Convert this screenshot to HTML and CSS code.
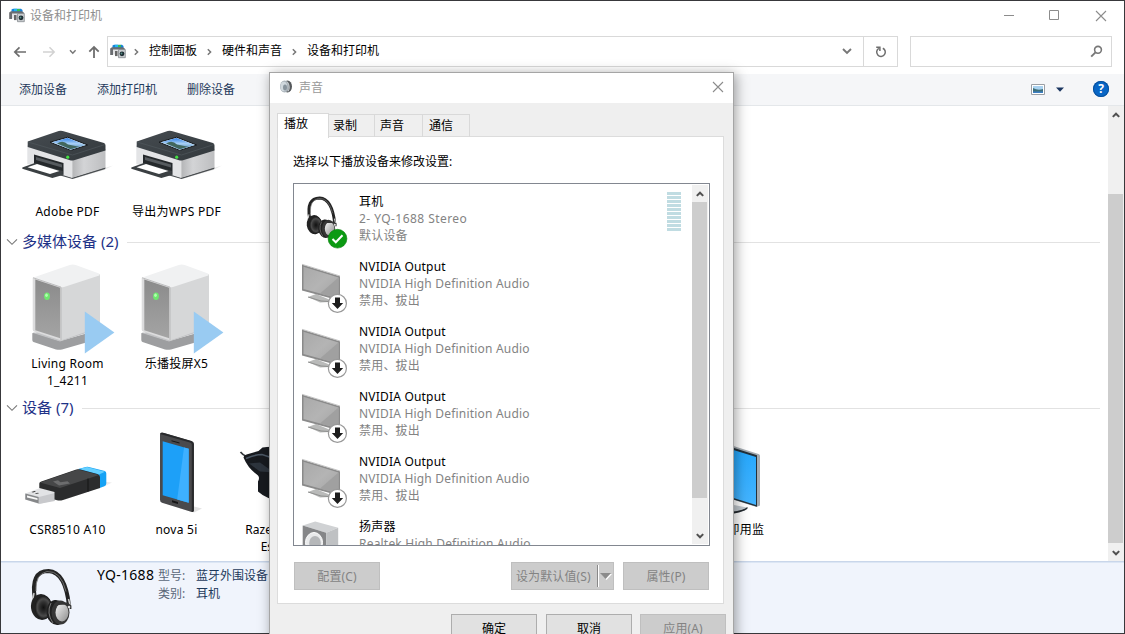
FILE: index.html
```html
<!DOCTYPE html>
<html lang="zh-CN">
<head>
<meta charset="utf-8">
<title>设备和打印机</title>
<link rel="stylesheet" href="styles.css">
</head>
<body>
<svg class="defs" width="0" height="0" aria-hidden="true">
  <defs>
    <linearGradient id="lid" x1="0" y1="0" x2="1" y2="1"><stop offset="0" stop-color="#454b50"/><stop offset="1" stop-color="#33393d"/></linearGradient>
    <linearGradient id="side" x1="0" y1="0" x2="1" y2="0"><stop offset="0" stop-color="#b4b5b7"/><stop offset=".35" stop-color="#d3d4d6"/><stop offset="1" stop-color="#bdbec0"/></linearGradient>
    <linearGradient id="photo" x1="0" y1="0" x2="0" y2="1"><stop offset="0" stop-color="#2f7fe6"/><stop offset=".5" stop-color="#a9d0f5"/><stop offset="1" stop-color="#3f7fb0"/></linearGradient>
    <linearGradient id="front" x1="0" y1="0" x2="0" y2="1"><stop offset="0" stop-color="#8b8b8b"/><stop offset="1" stop-color="#a4a4a4"/></linearGradient>
    <linearGradient id="panel" x1="0" y1="0" x2="1" y2="1"><stop offset="0" stop-color="#a9a9a9"/><stop offset=".5" stop-color="#b4b4b4"/><stop offset="1" stop-color="#a3a3a3"/></linearGradient>
    <linearGradient id="blue" x1="0" y1="0" x2="0" y2="1"><stop offset="0" stop-color="#1ea4fb"/><stop offset="1" stop-color="#44b4ff"/></linearGradient>
    <linearGradient id="disc" x1="0" y1="0" x2="1" y2="1"><stop offset="0" stop-color="#f4f4f4"/><stop offset="1" stop-color="#8d8d8d"/></linearGradient>
    <radialGradient id="cup"><stop offset="0" stop-color="#111"/><stop offset=".5" stop-color="#333"/><stop offset=".75" stop-color="#4c4c4c"/><stop offset="1" stop-color="#1a1a1a"/></radialGradient>
  </defs>
  <symbol id="printer" viewBox="13 106 109 97">
    <path d="M73 179l35-12 5-1.500-10 5z" fill="#e9e9e9"/>
    <path d="M27.300 163l45 14.500 33-10.500v2L72.500 179 55 174z" fill="#4a4e51"/>
    <path d="M27.300 145l45 14v19L27.300 164z" fill="#e3e4e6"/>
    <path d="M72.300 159l33.200-10v18.500l-33.200 10.200z" fill="url(#side)"/>
    <path d="M34 154.500l29.500 8.500v12L34 165z" fill="#25292c"/>
    <path d="M36 157l26 7.500v3L36 160z" fill="#565b5f"/>
    <path d="M22.300 167.500l12.500-4.500 28 8v4l-10.500 3-30-9.200z" fill="#3b4043"/>
    <path d="M27.500 167.300l9.500-3.300 22.500 6.900-9.500 3z" fill="#fff"/>
    <path d="M27.700 141.500l31-10.500q2-.6 4 0L104 143q1.500.5 1.500 2.500v5L74 160.200q-2 .6-4 0L27.700 147z" fill="url(#lid)"/>
    <path d="M28 142l44.500 13L105 144.500" fill="none" stroke="#535a5f" stroke-width=".6"/>
    <path d="M50 142.200l17.700-5 20 7.800-17 5.400z" fill="#dfe8ef" stroke="#15191c" stroke-width="1"/>
    <path d="M52 142.300l15.500-4.300 18.300 6.900-15 4.500z" fill="url(#photo)"/>
    <path d="M57 143.500q6-4 11 1l11 2.200-8.500 2.300z" fill="#42675d"/>
    <circle cx="67.700" cy="157.200" r="1.600" fill="#42df42"/>
  </symbol>
  <symbol id="server" viewBox="13 257 109 98">
    <path d="M32.300 333.500q0-1 2-.7L60 341l28-8v9l-26 7.400q-3 .8-6 0L33.500 342q-1.200-.5-1.200-2z" fill="#9d9ea0"/>
    <path d="M33 333l27 8.500 28-9-28-5z" fill="#c2c3c5"/>
    <path d="M61 286.500l39-12.500v53l-39 13.500z" fill="#d6d7d8"/>
    <path d="M32.700 277.700l37-12.600q3-1 6 0L99 273.500q1.500.8.300 2L64 287q-3 .8-5 0z" fill="#f0f1f2"/>
    <path d="M32.700 277.700L61 287v53.500l-27-9q-1.300-.4-1.300-2z" fill="#dcdcdd"/>
    <path d="M35.300 279.500l24.900 8.200v50.600l-24.900-8z" fill="url(#front)"/>
    <path d="M33 277.700l28 9.400v53" fill="none" stroke="#b2b2b4" stroke-width=".8"/>
    <ellipse cx="47" cy="296.300" rx="2.900" ry="3.700" fill="#6fe86f"/><ellipse cx="46.500" cy="295.300" rx="1.300" ry="1.800" fill="#b2ffb0"/>
    <path d="M84.800 311.600l29.600 20.900-29.600 20.900z" fill="#99cbf2"/>
  </symbol>
  <symbol id="usb" viewBox="13 424 109 97">
    <path d="M62 501l42-14 8-4-8-1z" fill="#ececec"/>
    <path d="M25.300 494l15-5.500 15 4v8l-16 4-14-4.500z" fill="#e2e3e5"/>
    <path d="M25.300 494l13.500 3.500v6.500l-13.500-4z" fill="#858789"/><path d="M27 496l10.500 2.700v1.800L27 498z" fill="#f8f8f8"/>
    <path d="M38.800 497.500l16-4v8l-16 3z" fill="#c8c9cc"/><path d="M31.500 492.500l3-1 1.500.6-3 1zM35 494l3-.8 1 .5-3 .9z" fill="#333"/>
    <path d="M78.300 469.500l7.500-2q1.500-.4 3 0l16 4q1.500.5 1.500 2.500v10q0 2-2 2.700L99 488.700z" fill="#15a2f5"/>
    <path d="M79 469.500l8-2 18 4.700-6 2.800z" fill="#64cfff"/>
    <path d="M39.300 484q0-1.300 2-2l35-12q2-.6 4-.1l17 4.500q2.700.8 2.700 3v11L63 500.500q-3 .9-6 .2l-2.500-.8v-7.500l-15.200-4z" fill="#2b2c2d"/>
    <path d="M40 483l38-13 21 5.500-39 13z" fill="#464748"/>
    <path d="M53 482l6 4 11-2-2.500-2.300-7 1.100-2.500-2z" fill="#6c6d6e"/>
    <path d="M88 479v13" stroke="#151515"/>
  </symbol>
  <symbol id="phone" viewBox="122 424 109 97">
    <path d="M177 508l17 5 8-4-8-2z" fill="#e2e2e2"/>
    <path d="M160 435q0-2.500 3-1.700l28 8.200q3 .9 3 3.500v66q0 2-3 1.200l-29-9q-2-.6-2-3z" fill="#4a4a4c"/>
    <path d="M160 434.500q1.500-2 4-1l27.500 8q2.300.8 2.300 3.500v66q0 1.800-2 1.400V445q0-1.500-1.800-2z" fill="#292a2c"/>
    <path d="M162.700 441.700l26 7.500v54l-26-7.500z" fill="#1da0f8"/>
    <path d="M184 447.900l4.700 1.300v54l-11.500-3.300z" fill="#3eb0ff"/>
    <path d="M171.500 440.700l8 2.300v1l-8-2.300zM172 500.700l6 1.800v2l-6-1.800z" fill="#151516"/>
  </symbol>
  <symbol id="mouse" viewBox="231 424 109 97">
    <path d="M240.500 452.500q2 3 7 5" fill="none" stroke="#33373b" stroke-width="1.600"/>
    <path d="M243.500 458q0-2 3-3l12-3.500 4-3.500q18-3 30 6l10 20v24l-20 4q-16-2-24.500-10v-10q2-4 0-6-10-7-14.500-18z" fill="#171a1f"/>
    <path d="M246 459q9-4 16-4l15 5" fill="none" stroke="#4c5866" stroke-width="1.500"/><path d="M249 464l11 8 14 1-14-10z" fill="#2d343d"/>
  </symbol>
  <symbol id="monitor" viewBox="667 424 109 97">
    <path d="M705 500l42 8q2 2-8 5l-13 2-30-9z" fill="#c1c8ce"/><path d="M724 512.500q17 0 23.500-5v1.500q-4 4-23.500 6.500z" fill="#22282d"/>
    <path d="M685 431l73.500 23.500q1.500.5 1.500 2V506l-3.500 1.500L685 485z" fill="#a5acb2"/>
    <path d="M685 433l72 22.800v51.500L685 485z" fill="#24313a"/>
    <path d="M687 436l69 21.500v48L687 484z" fill="url(#blue)"/>
  </symbol>
  <symbol id="headphones" viewBox="28 566 46 62">
    <path d="M35 598q-5-28 13.500-28 17 1 20.500 35" fill="none" stroke="#242424" stroke-width="4"/>
    <path d="M36 590q-1-17 11-19.500 14-1 19 20" fill="none" stroke="#777" stroke-width=".9"/>
    <path d="M34 592l-1.500 8M68.500 598l2 8" stroke="#c9c9c9" stroke-width="1.500"/>
    <ellipse cx="41.500" cy="606" rx="10.500" ry="13" transform="rotate(-8 41.500 606)" fill="#222"/>
    <ellipse cx="43.500" cy="606.500" rx="8.500" ry="11.500" fill="url(#cup)"/>
    <ellipse cx="56.500" cy="611.500" rx="10" ry="12.500" transform="rotate(-8 56.500 611.500)" fill="#202020"/>
    <path d="M51 602q-5 10 2 20" fill="none" stroke="#777"/>
    <ellipse cx="60.500" cy="611.500" rx="9" ry="12" fill="#363636"/>
    <ellipse cx="62" cy="611.500" rx="6.500" ry="9" fill="url(#disc)"/>
    <path d="M58 603l9-.5 3.500 2.500v3" fill="none" stroke="#333" stroke-width="1.800"/><circle cx="69" cy="606" r="1.300" fill="#ddd"/>
  </symbol>
  <symbol id="tv" viewBox="299 249 52 65">
    <path d="M308 297l8-3 12 5 2 3-10 .5z" fill="#b9bab9"/><path d="M308 297l13 4 8 .5" fill="none" stroke="#8e8f8e"/>
    <path d="M302 264.500l38 11.700v24.500l-38-10.200z" fill="#8a8a8a"/>
    <path d="M303.500 266.800l35 10.800v21l-35-9.500z" fill="url(#panel)"/><path d="M338.500 277.600v21l-18.500-5z" fill="#a0a0a0"/>
    <path d="M302 264.300l38 11.700" stroke="#c5c5c5"/>
    <circle cx="337.400" cy="303.400" r="9" fill="#fff" stroke="#999" stroke-width="1.200"/>
    <path d="M335 297.500h5v5.500h3.200l-5.700 6-5.700-6h3.200z" fill="#1d1d1d"/>
  </symbol>
  <symbol id="speaker" viewBox="299 509 52 65">
    <path d="M302.700 525.500l12.500-4 23 6.300-12 5z" fill="#d0d2d4"/>
    <path d="M302.700 525.500l23.500 7.300V560h-23.500z" fill="#858688"/><path d="M326.200 532.800l12-5V560h-12z" fill="#bfc1c3"/>
    <ellipse cx="314" cy="542.500" rx="8.500" ry="10" fill="#e9eaeb" stroke="#fff"/><ellipse cx="315" cy="543" rx="5.800" ry="7" fill="#b5b7b9"/>
  </symbol>
  <symbol id="devices" viewBox="0 0 16 16">
    <path d="M2.500 1.500L4 .8h8l1.500 1.200V4h-11z" fill="#1682d8"/><path d="M5 .8h3v2.700H5z" fill="#22b5f2"/><path d="M8 1h3v2H8z" fill="#35bd55"/>
    <path d="M.2 4.500L2 3.200h11l2 1.500V7H3v4H.2z" fill="#6a6d71"/>
    <path d="M3 5.500h6v7H5v-2H3z" fill="#e2e3e5"/><path d="M5 7h2.500v5H5z" fill="#666"/>
    <path d="M8.500 5.500h6.800v8.200H8.500z" fill="#c9cccf" stroke="#888c90" stroke-width=".8"/>
    <circle cx="12" cy="9.800" r="2.400" fill="#1d2d33"/><circle cx="11.500" cy="9.500" r=".9" fill="#568c84"/>
  </symbol>
  <symbol id="up" viewBox="0 0 8 6"><path d="M.8 4.900L4 1.700l3.200 3.200" fill="none" stroke="#505050" stroke-width="2"/></symbol>
  <symbol id="down" viewBox="0 0 8 6"><path d="M.8 1.100L4 4.300l3.200-3.200" fill="none" stroke="#505050" stroke-width="2"/></symbol>
  <symbol id="crumb" viewBox="0 0 5 8"><path d="M.8 1.200L3.600 4 .8 6.800" fill="none" stroke="#777" stroke-width="1.500"/></symbol>
  <symbol id="close" viewBox="0 0 12 12"><path d="M1 1l10 10M11 1L1 11" fill="none" stroke="#8c8c8c" stroke-width="1.100"/></symbol>
  <symbol id="fold" viewBox="0 0 12 8"><path d="M1 1.300l5 5 5-5" fill="none" stroke="#777" stroke-width="1.100"/></symbol>
</svg>

<main class="window">
  <header class="titlebar">
    <svg class="app-icon"><use href="#devices"/></svg>
    <span class="title">设备和打印机</span>
    <div class="caption">
      <svg width="12" height="12"><path d="M1 5.500h10" stroke="#8c8c8c"/></svg>
      <svg width="12" height="12"><path d="M.5.500h9v9H.5z" fill="none" stroke="#8c8c8c"/></svg>
      <svg width="12" height="12"><use href="#close"/></svg>
    </div>
  </header>

  <nav class="navbar">
    <div class="arrows">
      <svg width="14" height="12"><path d="M13 6H2M6.500 1.300L1.800 6l4.700 4.700" fill="none" stroke="#6e6e6e" stroke-width="1.700"/></svg>
      <svg width="14" height="12"><path d="M1 6h11M7.500 1.300L12.200 6l-4.700 4.700" fill="none" stroke="#d2d2d2" stroke-width="1.500"/></svg>
      <svg width="8" height="6"><path d="M1 1.300l2.800 2.900 2.800-2.900" fill="none" stroke="#777" stroke-width="1.500"/></svg>
      <svg width="12" height="14"><path d="M6 13V2M1.300 6.700L6 2l4.700 4.700" fill="none" stroke="#6e6e6e" stroke-width="1.800"/></svg>
    </div>
    <div class="address">
      <svg class="app-icon"><use href="#devices"/></svg>
      <svg class="crumb"><use href="#crumb"/></svg><span>控制面板</span>
      <svg class="crumb"><use href="#crumb"/></svg><span>硬件和声音</span>
      <svg class="crumb"><use href="#crumb"/></svg><span>设备和打印机</span>
      <svg class="drop" width="10" height="7"><path d="M1 1l4 4 4-4" fill="none" stroke="#777" stroke-width="1.900"/></svg>
    </div>
    <div class="refresh"><svg width="12" height="12"><path d="M7.800 2.200a4.300 4.300 0 1 1-4 .2M1.200 1.300h3.700v3.800" fill="none" stroke="#6e6e6e" stroke-width="1.500"/></svg></div>
    <div class="search"><svg width="13" height="13"><circle cx="8" cy="4.800" r="3.400" fill="none" stroke="#777" stroke-width="1.600"/><path d="M5.500 7.300L1.200 11.600" stroke="#777" stroke-width="1.900"/></svg></div>
  </nav>

  <div class="toolbar">
    <span>添加设备</span><span>添加打印机</span><span>删除设备</span>
    <div class="tools">
      <svg width="14" height="11"><path d="M.5.500h13v10H.5z" fill="#fff" stroke="#9a9fa5"/><path d="M2 2h10v7H2z" fill="#a9d2f0"/><path d="M2 4q5 3 10 1v4H2z" fill="#3d6f78"/><path d="M2 7.500h10V9H2z" fill="#3c7fc4"/></svg>
      <svg width="8" height="5"><path d="M0 .5h8L4 4.700z" fill="#1b3660"/></svg>
      <span class="help">?</span>
    </div>
  </div>

  <section class="content">
    <div class="groups">
      <div class="items first">
        <div class="item"><svg><use href="#printer"/></svg><span>Adobe PDF</span></div>
        <div class="item"><svg><use href="#printer"/></svg><span>导出为WPS PDF</span></div>
      </div>
      <h2 class="group"><svg><use href="#fold"/></svg>多媒体设备 (2)</h2>
      <div class="items">
        <div class="item"><svg><use href="#server"/></svg><span>Living Room<br>1_4211</span></div>
        <div class="item"><svg><use href="#server"/></svg><span>乐播投屏X5</span></div>
      </div>
      <h2 class="group"><svg><use href="#fold"/></svg>设备 (7)</h2>
      <div class="items">
        <div class="item"><svg><use href="#usb"/></svg><span>CSR8510 A10</span></div>
        <div class="item"><svg><use href="#phone"/></svg><span>nova 5i</span></div>
        <div class="item razer"><svg><use href="#mouse"/></svg><span>Razer Abyssus<br>Essential</span></div>
        <div class="item last"><svg><use href="#monitor"/></svg><span>通用即插即用监<br>视器</span></div>
      </div>
    </div>
    <div class="scroll main-scroll"><svg><use href="#up"/></svg><div class="thumb"></div><svg><use href="#down"/></svg></div>
  </section>

  <footer class="details">
    <svg class="photo"><use href="#headphones"/></svg>
    <strong>YQ-1688</strong>
    <dl><dt>型号:</dt><dd>蓝牙外围设备</dd><dt>类别:</dt><dd>耳机</dd></dl>
  </footer>
</main>

<section class="dialog">
  <header class="dialog-title">
    <svg class="sound" viewBox="0 0 14 16"><ellipse cx="8.500" cy="7.500" rx="4.500" ry="6" fill="#55595c"/><ellipse cx="5.500" cy="7.500" rx="4.500" ry="6" fill="#aab3ba"/><ellipse cx="4.800" cy="7.500" rx="3.300" ry="4.800" fill="#d0d8dd"/><ellipse cx="6" cy="8.500" rx="2" ry="3" fill="#87939c"/><path d="M8 2.500q4 5 1 10" fill="none" stroke="#c9cdd0"/></svg>
    <span>声音</span>
    <svg class="x" width="12" height="12"><use href="#close"/></svg>
  </header>
  <div class="tabs"><span class="active">播放</span><span>录制</span><span>声音</span><span>通信</span></div>
  <div class="panel">
    <p>选择以下播放设备来修改设置:</p>
    <div class="list">
      <div class="rows">
        <div class="row">
          <svg viewBox="299 184 52 65"><use href="#headphones" x="304.500" y="195" width="34" height="46"/><circle cx="337.500" cy="238.700" r="9.400" fill="#0b9a12" stroke="#087c0c" stroke-width=".6"/><path d="M332.500 239l3.300 3.300 6.700-7" fill="none" stroke="#fff" stroke-width="2"/></svg>
          <div><b>耳机</b><i class="stereo">2- YQ-1688 Stereo</i><i>默认设备</i></div>
          <div class="meter"></div>
        </div>
        <div class="row"><svg><use href="#tv"/></svg><div><b>NVIDIA Output</b><i>NVIDIA High Definition Audio</i><i>禁用、拔出</i></div></div>
        <div class="row"><svg><use href="#tv"/></svg><div><b>NVIDIA Output</b><i>NVIDIA High Definition Audio</i><i>禁用、拔出</i></div></div>
        <div class="row"><svg><use href="#tv"/></svg><div><b>NVIDIA Output</b><i>NVIDIA High Definition Audio</i><i>禁用、拔出</i></div></div>
        <div class="row"><svg><use href="#tv"/></svg><div><b>NVIDIA Output</b><i>NVIDIA High Definition Audio</i><i>禁用、拔出</i></div></div>
        <div class="row"><svg><use href="#speaker"/></svg><div><b>扬声器</b><i>Realtek High Definition Audio</i></div></div>
      </div>
      <div class="scroll list-scroll"><svg><use href="#up"/></svg><div class="thumb"></div><svg><use href="#down"/></svg></div>
    </div>
    <div class="actions">
      <span class="btn off">配置(C)</span>
      <span class="btn off split">设为默认值(S)<svg width="17" height="22"><path d="M.5 0v22" stroke="#888"/><path d="M1.500 0v22" stroke="#fff"/><path d="M4 9h11l-5.500 6z" fill="#fff"/><path d="M3 8h11l-5.500 6z" fill="#8b8b8b"/></svg></span>
      <span class="btn off">属性(P)</span>
    </div>
  </div>
  <footer class="confirm"><span class="btn">确定</span><span class="btn">取消</span><span class="btn off">应用(A)</span></footer>
</section>
</body>
</html>
```
FILE: styles.css
```css
* { box-sizing: border-box; }
body {
  margin: 0;
  width: 1125px;
  height: 634px;
  overflow: hidden;
  position: relative;
  background: #38383b;
  font: 12px/17px "Noto Sans", "Noto Sans CJK SC", sans-serif;
  color: #000;
}
svg { display: block; flex: none; }
.defs { position: absolute; }

.window {
  position: absolute;
  inset: 1px;
  display: flex;
  flex-direction: column;
  background: #fff;
}
.titlebar { height: 35px; padding: 6px 17px 0 8px; display: flex; align-items: flex-start; }
.titlebar .app-icon { margin-top: 1px; }
.app-icon { width: 16px; height: 16px; }
.title { margin-left: 5px; color: #8f8f8f; }
.caption { margin-left: auto; display: flex; gap: 34px; padding-top: 3px; }

.navbar { height: 38px; display: flex; }
.arrows { width: 105px; height: 31px; padding-left: 12px; display: flex; align-items: center; gap: 15px; }
.arrows svg:nth-child(3) { margin-left: -2px; }
.arrows svg:nth-child(4) { margin-left: -4px; }
.address, .refresh, .search { height: 31px; border: 1px solid #d9d9d9; display: flex; align-items: center; }
.address { width: 757px; margin-left: 1px; padding-left: 2px; }
.address span { margin: -2px 10px 0 10px; }
.crumb { width: 5px; height: 8px; }
.address .app-icon + .crumb { margin-left: 8px; }
.drop { margin-left: auto; margin-right: 11px; }
.refresh { width: 35px; margin-left: -1px; justify-content: center; }
.search { width: 202px; margin-left: 12px; justify-content: flex-end; padding-right: 8px; }

.toolbar {
  height: 32px;
  background: #f5f6f8;
  border-bottom: 1px solid #e4e7ea;
  display: flex;
  align-items: center;
  gap: 30px;
  padding: 0 15px 0 18px;
  color: #1e395b;
}
.tools { margin-left: auto; margin-top: -1px; display: flex; align-items: center; }
.tools svg:nth-child(2) { margin-left: 11px; }
.help {
  width: 16px; height: 16px; margin-left: 29px;
  border-radius: 50%;
  background: #0866c6;
  box-shadow: inset 0 0 0 1px #07509c;
  color: #fff;
  font-weight: 700;
  line-height: 16px;
  text-align: center;
}

.content { height: 455px; display: flex; }
.groups { flex: 1; padding-right: 8px; }
.items { display: grid; grid-template-columns: repeat(7, 109px); padding: 5px 0 0 12px; height: 145px; }
.items.first { padding-top: 0; height: 125px; }
.item { text-align: center; }
.item svg { width: 109px; height: 98px; }
.first .item svg { height: 97px; }
.item span { display: block; letter-spacing: .25px; white-space: nowrap; }
.item.razer span { letter-spacing: 0; }
.last { grid-column: 7; }
.group {
  margin: 0;
  height: 21px;
  display: flex;
  align-items: center;
  font-size: 15px;
  line-height: 21px;
  font-weight: 400;
  color: #1e3287;
}
.group svg { width: 12px; height: 8px; margin: 0 4px 0 5px; }
.group::after { content: ""; flex: 1; height: 1px; margin: 2px 0 0 9px; background: #e2e2e2; }

.scroll { width: 16px; background: #f0f0f0; display: flex; flex-direction: column; align-items: flex-start; }
.scroll svg { width: 8px; height: 6px; margin-left: 3.500px; }
.thumb { width: 15px; background: #cdcdcd; }
.main-scroll { padding-top: 6px; }
.main-scroll .thumb { height: 349px; margin: 76px 0 7px; }

.details {
  height: 72px;
  border-top: 1px solid #c9d6ea;
  box-shadow: inset 0 1px #dce6f4;
  background: #f0f4fc;
  display: flex;
  padding: 5px 0 0 27px;
}
.photo { width: 46px; height: 62px; }
.details strong { margin: -1px 0 0 23px; width: 61px; font-size: 14px; font-weight: 400; letter-spacing: .3px; }
.details dl { margin: 0; display: grid; grid-template-columns: 38px auto; grid-auto-rows: 18px; color: #5a6779; }
.details dd { margin: 0; color: #1e395b; }

.dialog {
  position: absolute;
  left: 269px;
  top: 72px;
  width: 465px;
  height: 580px;
  border: 1px solid #a5a5a5;
  background: #efefef;
  box-shadow: 2px 2px 12px rgba(0, 0, 0, .38);
}
.dialog-title { height: 30px; background: #fff; display: flex; align-items: center; padding: 0 9px 2px; color: #999; }
.sound { width: 14px; height: 16px; }
.dialog-title span { margin-left: 6px; }
.x { margin-left: auto; }

.tabs { height: 34px; padding: 9px 0 0 7px; display: flex; align-items: flex-end; }
.tabs span { height: 23px; width: 49px; margin-left: -1px; border: 1px solid #d9d9d9; border-bottom: 0; padding: 1px 0 0 5px; line-height: 20px; }
.tabs .active + span { width: 48px; margin-left: -2px; }
.tabs span:last-child { width: 48px; padding-left: 6px; }
.tabs .active { position: relative; width: 52px; height: 25px; margin: 0 0 -1px; padding: 0 0 0 6px; background: #fff; z-index: 1; }
.panel { margin-left: 7px; width: 447px; height: 468px; margin-top: -1px; border: 1px solid #dcdcdc; background: #fff; padding: 16px 13px 0 15px; }
.panel p { margin: 0 0 13px; }
.list { width: 417px; height: 363px; border: 1px solid #828790; display: flex; padding: 0 1px 0 0; overflow: hidden; }
.rows { width: 398px; height: 361px; overflow: hidden; }
.row { height: 65px; display: flex; padding-left: 5px; }
.row > svg { width: 52px; height: 65px; }
.row > div:not(.meter) { margin: 9px 0 0 8px; }
.row b, .row i { display: block; font-weight: 400; font-style: normal; letter-spacing: .2px; white-space: nowrap; }
.row i { color: #838383; }
.row .stereo { letter-spacing: .45px; }
.meter { width: 14px; height: 39px; margin: 8px 11px 0 auto; background: repeating-linear-gradient(#c0dce2 0 3px, #fff 3px 4px); }
.list-scroll { height: 359px; margin-top: 1px; padding-top: 6px; }
.list-scroll .thumb { height: 296px; margin: 5px 0 35px; }

.actions { display: flex; margin: 16px 0 0 1px; }
.btn { width: 86px; height: 28px; flex: none; display: flex; align-items: center; justify-content: center; border: 1px solid #adadad; background: #e1e1e1; letter-spacing: .1px; }
.btn.off { background: #ccc; border-color: #bfbfbf; color: #838383; }
.btn.split { width: 103px; margin: 0 9px 0 131px; padding-left: 4px; justify-content: space-between; }
.btn.split svg { margin-right: -1px; }
.confirm { display: flex; justify-content: flex-end; gap: 8px; padding: 10px 7px 0 0; }
.confirm .btn:first-child { margin-right: 1px; }
```
